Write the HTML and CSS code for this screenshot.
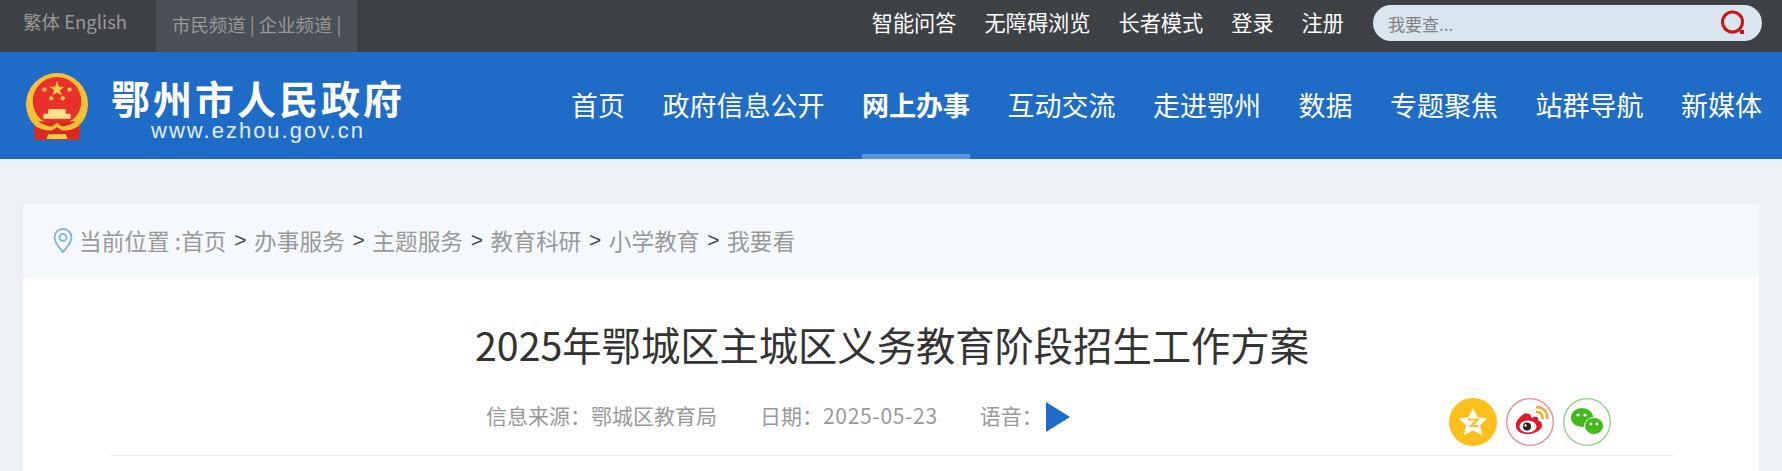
FILE: index.html
```html
<!DOCTYPE html>
<html lang="zh-CN">
<head>
    <meta charset="UTF-8">
    <meta name="viewport" content="width=device-width, initial-scale=1.0">
    <title>2025年鄂城区主城区义务教育阶段招生工作方案</title>
    <link rel="stylesheet" href="styles.css">
</head>
<body>
    <!-- top bar -->
    <div class="topbar">
        <div class="lang"><a>繁体</a> <a>English</a></div>
        <div class="channel">市民频道 | 企业频道 |</div>
        <div class="top-links">
            <a>智能问答</a>
            <a>无障碍浏览</a>
            <a>长者模式</a>
            <a>登录</a>
            <a>注册</a>
        </div>
        <div class="search">
            <span class="search-text">我要查...</span>
            <svg class="search-icon" width="28" height="28" viewBox="0 0 28 28">
                <circle cx="13.5" cy="13" r="10" fill="none" stroke="#c8161d" stroke-width="3"/>
                <rect x="21" y="21" width="4" height="4" fill="#c8161d"/>
            </svg>
        </div>
    </div>

    <!-- header -->
    <div class="header">
        <div class="logo">
            <svg class="emblem" width="64" height="68" viewBox="0 0 66 70">
                <circle cx="33" cy="32" r="32" fill="#f7c136"/>
                <circle cx="33" cy="29" r="25" fill="#e9302a"/>
                <polygon points="33,8 35,14 41,14 36,17.500 38,23.500 33,20 28,23.500 30,17.500 25,14 31,14" fill="#f9cf4a"/>
                <circle cx="20" cy="17" r="2.200" fill="#f9cf4a"/>
                <circle cx="46" cy="17" r="2.200" fill="#f9cf4a"/>
                <circle cx="27" cy="26" r="2.200" fill="#f9cf4a"/>
                <circle cx="39" cy="26" r="2.200" fill="#f9cf4a"/>
                <path d="M24 37h18v5h5v5H19v-5h5z" fill="#fbe08a"/>
                <path d="M9 50h48l-1 19H10z" fill="#d92a22"/>
                <path d="M8 46c7 5 14 9 20 9l5-4 5 4c6 0 13-4 20-9l-2 8c-6 4-12 6-18 5l-5-3-5 3c-6 1-12-1-18-5z" fill="#f7c136"/>
                <path d="M24 63h18l2 5H22z" fill="#f9cf4a"/>
            </svg>
            <div class="logo-text">
                <div class="logo-name">鄂州市人民政府</div>
                <div class="logo-url">www.ezhou.gov.cn</div>
            </div>
        </div>
        <ul class="nav">
            <li>首页</li>
            <li>政府信息公开</li>
            <li class="active">网上办事</li>
            <li>互动交流</li>
            <li>走进鄂州</li>
            <li>数据</li>
            <li>专题聚焦</li>
            <li>站群导航</li>
            <li>新媒体</li>
        </ul>
    </div>

    <div class="main">
        <!-- breadcrumb -->
        <div class="crumb">
            <svg class="pin" width="20" height="25" viewBox="0 0 20 25">
                <path d="M10 1C5 1 1.500 4.800 1.500 9.500 1.500 15 7 20.500 10 24c3-3.500 8.500-9 8.500-14.500C18.500 4.800 15 1 10 1z" fill="none" stroke="#7fb2e5" stroke-width="1.800"/>
                <circle cx="10" cy="9.500" r="3.500" fill="none" stroke="#7fb2e5" stroke-width="1.800"/>
            </svg>
            <span>当前位置 :首页</span>
            <i>&gt;</i><span>办事服务</span>
            <i>&gt;</i><span>主题服务</span>
            <i>&gt;</i><span>教育科研</span>
            <i>&gt;</i><span>小学教育</span>
            <i>&gt;</i><span>我要看</span>
        </div>

        <div class="article">
            <h1>2025年鄂城区主城区义务教育阶段招生工作方案</h1>
            <div class="meta">
                <span class="source">信息来源：鄂城区教育局</span>
                <span class="date">日期：<b>2025-05-23</b></span>
                <span class="voice">语音：</span>
                <svg class="play" width="24" height="30" viewBox="0 0 24 30">
                    <polygon points="0,0 24,15 0,30" fill="#1f6cc8"/>
                </svg>
                <div class="share">
                    <svg width="48" height="48" viewBox="0 0 48 48">
                        <circle cx="24" cy="24" r="24" fill="#fcc01c"/>
                        <polygon points="24,10 28.500,19 38,20.500 31,27.500 33,37 24,32.500 15,37 17,27.500 10,20.500 19.500,19" fill="#fff"/>
                        <path d="M19 21.500h10l-7 6.500h7" fill="none" stroke="#fcc01c" stroke-width="2"/>
                    </svg>
                    <svg width="48" height="48" viewBox="0 0 48 48">
                        <circle cx="24" cy="24" r="23.300" fill="#fff" stroke="#e58b8b" stroke-width="1.300"/>
                        <path d="M20 15C13 18 9 24 10 29c1 5 7 7.500 13 7 7-.5 13-4.500 13-9 0-2.500-2-4-4-4.500 1-3-1-4.500-4-3.500l-3 1c.5-3.500-2-5-5-4.500z" fill="#e6162d"/>
                        <ellipse cx="22" cy="28.500" rx="8.500" ry="6" fill="#fff"/>
                        <circle cx="21" cy="28.500" r="4" fill="#222"/>
                        <circle cx="19.500" cy="27.500" r="1.200" fill="#fff"/>
                        <path d="M30 14c4-.5 7 2.500 6.500 7M30 9.500c7-1 12 4.500 11 11.500" fill="none" stroke="#f5a623" stroke-width="2.500"/>
                    </svg>
                    <svg width="48" height="48" viewBox="0 0 48 48">
                        <circle cx="24" cy="24" r="23.300" fill="#fff" stroke="#8fce7f" stroke-width="1.300"/>
                        <ellipse cx="19" cy="19.500" rx="11" ry="9.500" fill="#44b91a"/>
                        <ellipse cx="31" cy="28" rx="9.500" ry="8.500" fill="#44b91a" stroke="#fff" stroke-width="1"/>
                        <circle cx="15" cy="17" r="1.600" fill="#fff"/>
                        <circle cx="22" cy="17" r="1.600" fill="#fff"/>
                        <circle cx="28" cy="26" r="1.400" fill="#fff"/>
                        <circle cx="34" cy="26" r="1.400" fill="#fff"/>
                    </svg>
                </div>
            </div>
        </div>
    </div>
</body>
</html>
```

FILE: styles.css
```css
* {
    box-sizing: border-box;
}

body {
    margin: 0;
    background-color: #edf1f6;
    font-family: "Noto Sans CJK SC", "Open Sans", sans-serif;
    overflow: hidden;
}

ul {
    margin: 0;
    padding: 0;
    list-style: none;
}

/* top bar */
.topbar {
    display: flex;
    height: 52px;
    padding: 0 20px 0 23px;
    background-color: #3e4145;
}

.lang {
    width: 133px;
    padding-top: 8px;
    color: #999;
    font-size: 18.500px;
    line-height: 27px;
    white-space: nowrap;
}

.channel {
    width: 201px;
    padding: 10px 0 0 16px;
    background-color: #4b5056;
    color: #999;
    font-size: 18.400px;
    line-height: 28px;
    white-space: nowrap;
}

.top-links {
    display: flex;
    gap: 28px;
    margin-left: auto;
    padding-top: 6px;
    color: #fff;
    font-size: 21.200px;
    line-height: 32px;
}

.search {
    display: flex;
    justify-content: space-between;
    align-items: center;
    width: 389px;
    height: 36px;
    margin: 5px 0 0 29px;
    padding: 0 15px;
    border-radius: 18px;
    background-color: #d9e5ef;
}

.search-text {
    color: #808080;
    font-size: 17px;
}

/* header */
.header {
    display: flex;
    justify-content: space-between;
    height: 107px;
    padding: 0 20px 0 25px;
    background-color: #1e6cc8;
}

.logo {
    display: flex;
    padding-top: 21px;
}

.emblem {
    flex-shrink: 0;
}

.logo-text {
    margin-left: 22px;
    color: #fff;
    text-align: center;
}

.logo-name {
    margin-top: 2px;
    font-size: 39px;
    font-weight: 700;
    letter-spacing: 3px;
    line-height: 44px;
    white-space: nowrap;
}

.logo-url {
    color: #e3eefb;
    font-family: "Liberation Sans", sans-serif;
    font-size: 22px;
    letter-spacing: 2px;
    line-height: 24px;
}

.nav {
    display: flex;
    gap: 37.500px;
    color: #fff;
    font-size: 27px;
    line-height: 105px;
}

.nav li {
    height: 107px;
    white-space: nowrap;
}

.nav .active {
    border-bottom: 5px solid #5b94e0;
    font-weight: 700;
}

/* page body */
.main {
    margin: 45px 23px 0;
}

.crumb {
    display: flex;
    align-items: center;
    height: 74px;
    padding: 0 0 2px 30px;
    background-color: #f5f9fd;
    color: #999;
    font-size: 22.700px;
    white-space: nowrap;
}

.pin {
    margin-right: 6px;
}

.crumb i {
    width: 27.500px;
    color: #444;
    font-family: "Liberation Sans", sans-serif;
    font-size: 21px;
    font-style: normal;
    text-align: center;
}

.article {
    height: 200px;
    padding: 0 86px 0 88px;
    background-color: #fff;
}

h1 {
    margin: 0;
    padding-top: 39px;
    color: #333;
    font-size: 39.300px;
    font-weight: 400;
    line-height: 54px;
    text-align: center;
}

.meta {
    display: flex;
    align-items: flex-start;
    height: 85px;
    padding: 27px 62px 0 375px;
    border-bottom: 1px solid #eee;
    color: #999;
    font-size: 21px;
    line-height: 34px;
}

.date {
    margin-left: 43px;
}

.date b {
    font-weight: 400;
    letter-spacing: 0.700px;
}

.voice {
    margin-left: 42px;
}

.play {
    margin: 4px 0 0 3px;
}

.share {
    display: flex;
    gap: 9px;
    margin-left: auto;
}
```
